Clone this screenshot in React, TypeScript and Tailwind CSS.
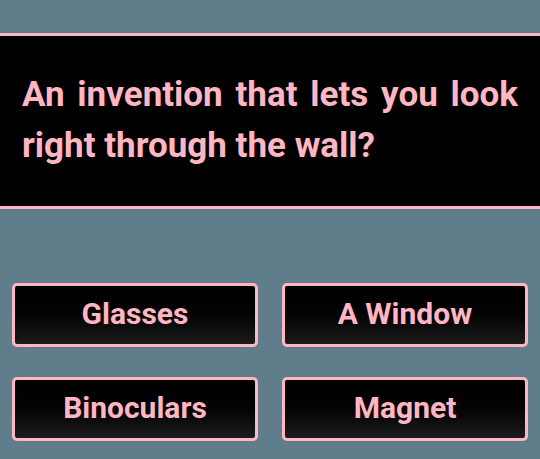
const answers = ['Glasses', 'A Window', 'Binoculars', 'Magnet'];

export default function App() {
  return (
    <div
      className="min-h-[459px] w-full bg-[#607d8b] pt-[33px]"
      style={{ fontFamily: 'Roboto, "Liberation Sans", sans-serif' }}
    >
      <div className="border-y-[3px] border-[#ffb6c1] bg-black px-[22px] pt-[33px] pb-[35px]">
        <p className="text-justify text-[35px] font-bold leading-[51px] text-[#ffb6c1]">
          An invention that lets you look right through the wall?
        </p>
      </div>

      <div className="mt-[74px] grid grid-cols-2 gap-x-[24px] gap-y-[30px] px-[12px]">
        {answers.map((a) => (
          <button
            key={a}
            className="flex h-[64px] items-center justify-center rounded-[5px] border-[3px] border-[#ffb6c1] bg-gradient-to-b from-black to-[#1c1c1c] pb-[3px] text-[30px] font-bold text-[#ffb6c1]"
          >
            {a}
          </button>
        ))}
      </div>
    </div>
  );
}
